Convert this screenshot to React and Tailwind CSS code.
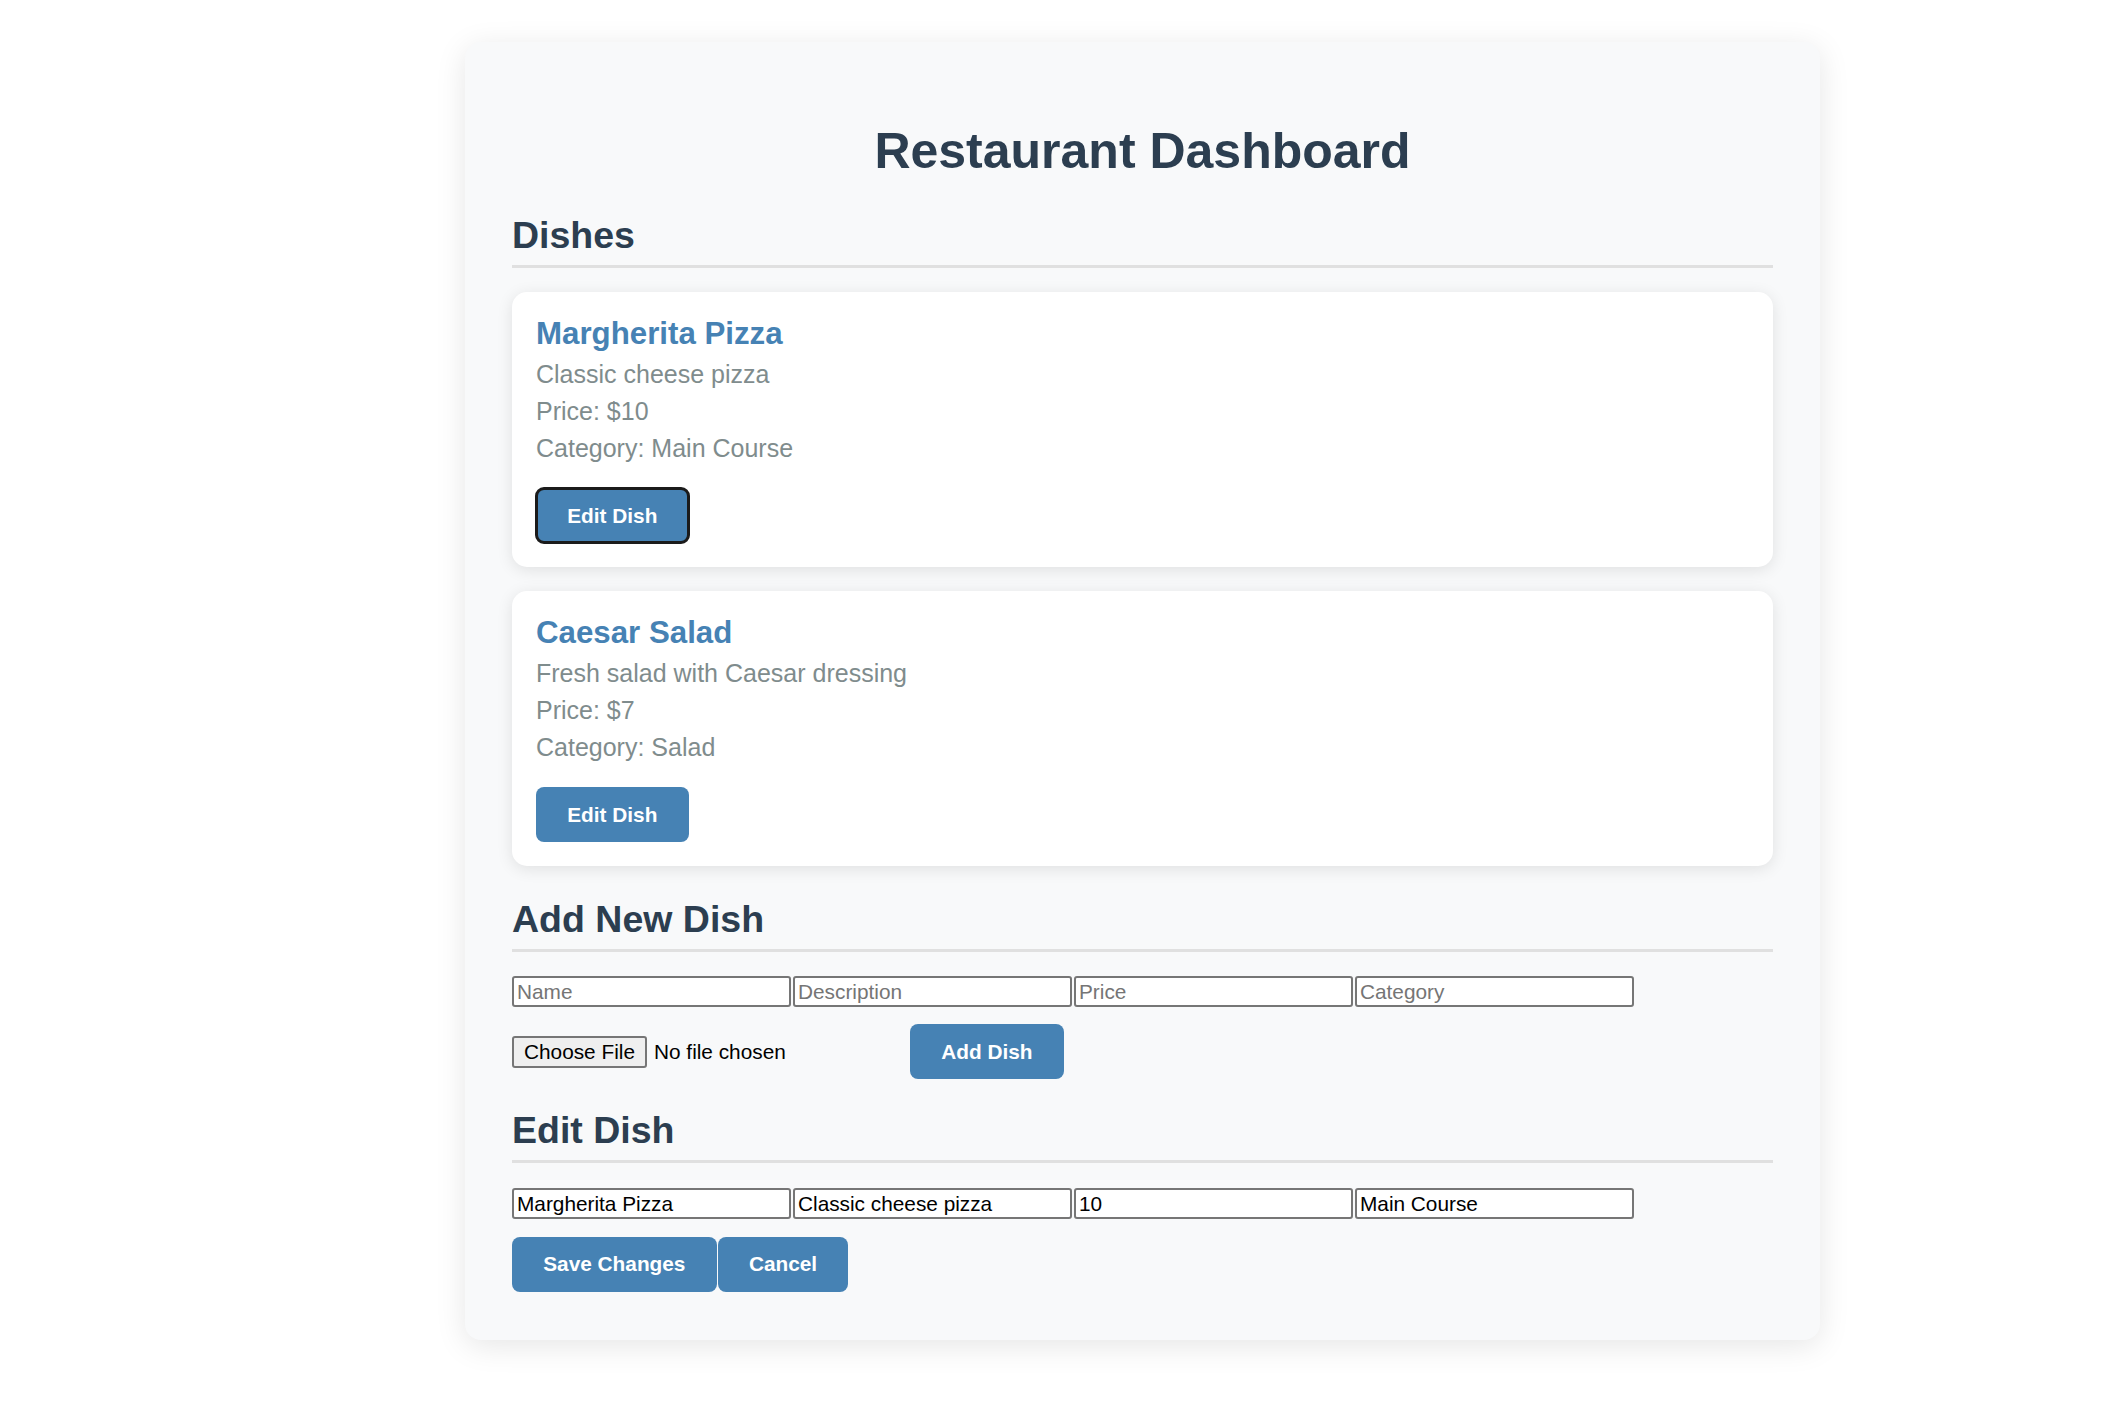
import React from 'react';

const DISHES = [
  { name: 'Margherita Pizza', description: 'Classic cheese pizza', price: 10, category: 'Main Course' },
  { name: 'Caesar Salad', description: 'Fresh salad with Caesar dressing', price: 7, category: 'Salad' }
];

const FIELDS = ['Name', 'Description', 'Price', 'Category'];

function SectionTitle({ children, className = '' }) {
  return (
    <h2 className={`text-[37.5px] font-bold leading-[43px] text-[#2c3e50] pb-[8px] border-b-[3px] border-[#e0e0e0] ${className}`}>
      {children}
    </h2>
  );
}

function BlueButton({ children, className = '' }) {
  return (
    <button className={`bg-[#4682b4] text-white text-[20.8px] font-bold leading-[24px] px-[31.25px] py-[15.5px] rounded-[8px] cursor-pointer ${className}`}>
      {children}
    </button>
  );
}

function TextField({ placeholder, value }) {
  return (
    <input
      type="text"
      placeholder={placeholder}
      defaultValue={value}
      className="w-[279px] h-[31px] bg-white border-2 border-[#767676] rounded-[3px] px-[3px] text-[20.8px] text-black placeholder:text-[#757575] focus:outline-none"
    />
  );
}

function DishCard({ dish, focused }) {
  return (
    <div className="bg-white rounded-[15px] pt-[23.5px] px-6 pb-6 shadow-[0_3px_16px_rgba(0,0,0,0.1)]">
      <h3 className="text-[31.25px] font-bold leading-[36px] text-[#4682b4]">{dish.name}</h3>
      <p className="mt-[8.5px] text-[25px] leading-[29px] text-[#7f8c8d]">{dish.description}</p>
      <p className="mt-[8px] text-[25px] leading-[29px] text-[#7f8c8d]">Price: ${dish.price}</p>
      <p className="mt-[8px] text-[25px] leading-[29px] text-[#7f8c8d]">Category: {dish.category}</p>
      <div className="mt-[25px] flex">
        <BlueButton className={focused ? 'outline-3 outline-[#1b1b1b] -outline-offset-2' : ''}>Edit Dish</BlueButton>
      </div>
    </div>
  );
}

export default function App() {
  return (
    <div className="min-h-screen bg-white pt-[42px] pl-[465px] pb-[40px] font-['Liberation_Sans',Arial,sans-serif]">
      <div className="w-[1355px] bg-[#f8f9fa] rounded-[16px] pt-[47px] px-[47px] pb-[48px] shadow-[0_6px_31px_rgba(0,0,0,0.1)] flex flex-col">
        <h1 className="mt-[33.5px] text-[50px] font-bold leading-[57.5px] text-center text-[#2c3e50]">Restaurant Dashboard</h1>

        {/* Dishes list */}
        <SectionTitle className="mt-[34px]">Dishes</SectionTitle>
        <div className="mt-[24px] flex flex-col gap-[24px]">
          {DISHES.map((dish, i) => (
            <DishCard key={dish.name} dish={dish} focused={i === 0} />
          ))}
        </div>

        {/* Add form */}
        <SectionTitle className="mt-[32px]">Add New Dish</SectionTitle>
        <div className="mt-[24px] flex gap-[2px]">
          {FIELDS.map((f) => (
            <TextField key={f} placeholder={f} />
          ))}
        </div>
        <div className="mt-[17.3px] flex items-center">
          <div className="w-[398px] flex items-center">
            <span className="h-[31.6px] flex items-center bg-[#efefef] border-2 border-[#767676] rounded-[3px] px-[10px] text-[20.8px] text-black">Choose File</span>
            <span className="ml-[7px] text-[20.8px] text-black">No file chosen</span>
          </div>
          <BlueButton>Add Dish</BlueButton>
        </div>

        {/* Edit form */}
        <SectionTitle className="mt-[30px]">Edit Dish</SectionTitle>
        <div className="mt-[25px] flex gap-[2px]">
          <TextField placeholder="Name" value="Margherita Pizza" />
          <TextField placeholder="Description" value="Classic cheese pizza" />
          <TextField placeholder="Price" value="10" />
          <TextField placeholder="Category" value="Main Course" />
        </div>
        <div className="mt-[17.5px] flex gap-px">
          <BlueButton>Save Changes</BlueButton>
          <BlueButton>Cancel</BlueButton>
        </div>
      </div>
    </div>
  );
}
